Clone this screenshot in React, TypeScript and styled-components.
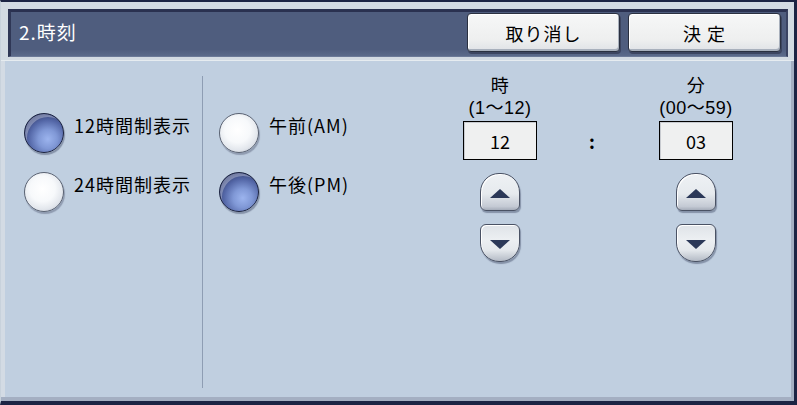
import React, { useState } from "react";
import styled, { createGlobalStyle } from "styled-components";

const GlobalStyle = createGlobalStyle`
  html, body {
    margin: 0;
    padding: 0;
    background: #1c2444;
  }
  body {
    font-family: "Noto Sans CJK JP", "Noto Sans", sans-serif;
  }
`;

type Format = "12" | "24";
type Meridiem = "AM" | "PM";

const pad2 = (n: number) => (n < 10 ? `0${n}` : `${n}`);

const App: React.FC = () => {
  const [format, setFormat] = useState<Format>("12");
  const [meridiem, setMeridiem] = useState<Meridiem>("PM");
  const [hour, setHour] = useState(12);
  const [minute, setMinute] = useState(3);

  const maxHour = format === "12" ? 12 : 23;
  const minHour = format === "12" ? 1 : 0;

  function stepHour(d: number) {
    let h = hour + d;
    if (h > maxHour) h = minHour;
    if (h < minHour) h = maxHour;
    setHour(h);
  }
  function stepMinute(d: number) {
    setMinute((minute + d + 60) % 60);
  }

  return (
    <>
      <GlobalStyle />
      <Frame>
        <HeaderStrip>
          <HeaderBar>
            <Title>2.時刻</Title>
            <HeaderButtons>
              <HeaderButton>取り消し</HeaderButton>
              <HeaderButton>決 定</HeaderButton>
            </HeaderButtons>
          </HeaderBar>
        </HeaderStrip>

        <Body>
          <FormatColumn>
            <RadioRow onClick={() => setFormat("12")}>
              <Radio $on={format === "12"} />
              <RadioLabel>12時間制表示</RadioLabel>
            </RadioRow>
            <RadioRow onClick={() => setFormat("24")}>
              <Radio $on={format === "24"} />
              <RadioLabel>24時間制表示</RadioLabel>
            </RadioRow>
          </FormatColumn>

          <Divider />

          <MeridiemColumn>
            <RadioRow onClick={() => setMeridiem("AM")}>
              <Radio $on={meridiem === "AM"} />
              <RadioLabel>午前(AM)</RadioLabel>
            </RadioRow>
            <RadioRow onClick={() => setMeridiem("PM")}>
              <Radio $on={meridiem === "PM"} />
              <RadioLabel>午後(PM)</RadioLabel>
            </RadioRow>
          </MeridiemColumn>

          <TimeGroup>
            <TimeColumn>
              <TimeCaption>
                <CaptionLine>時</CaptionLine>
                <CaptionLine>(1〜12)</CaptionLine>
              </TimeCaption>
              <ValueBox>{hour}</ValueBox>
              <StepButton $dir="up" onClick={() => stepHour(1)}>
                <Arrow $dir="up" />
              </StepButton>
              <StepButton $dir="down" onClick={() => stepHour(-1)}>
                <Arrow $dir="down" />
              </StepButton>
            </TimeColumn>

            <ColonColumn>:</ColonColumn>

            <TimeColumn>
              <TimeCaption>
                <CaptionLine>分</CaptionLine>
                <CaptionLine>(00〜59)</CaptionLine>
              </TimeCaption>
              <ValueBox>{pad2(minute)}</ValueBox>
              <StepButton $dir="up" onClick={() => stepMinute(1)}>
                <Arrow $dir="up" />
              </StepButton>
              <StepButton $dir="down" onClick={() => stepMinute(-1)}>
                <Arrow $dir="down" />
              </StepButton>
            </TimeColumn>
          </TimeGroup>
        </Body>
      </Frame>
    </>
  );
};

const Frame = styled.div`
  width: 797px;
  height: 405px;
  box-sizing: border-box;
  border-top: 2px solid #1c2444;
  border-right: 3px solid #1c2444;
  border-bottom: 4px solid #1c2444;
  border-left: 1px solid #c8d2dc;
  background: #c0cfe0;
  display: flex;
  flex-direction: column;
  box-shadow: inset -3px -4px 0 #a4afc2, inset 4px 0 0 #d3dbe4;
`;

const HeaderStrip = styled.div`
  background: #d3dbe3;
  padding: 7px 6px 3px 7px;
  border-bottom: 1px solid #e6ecf0;
`;

const HeaderBar = styled.div`
  height: 48px;
  box-sizing: border-box;
  background: linear-gradient(#4f5d7e 0%, #4f5d7e 85%, #5b6a8a 100%);
  border-top: 3px solid #2a3150;
  border-left: 3px solid #2f3756;
  border-right: 2px solid #3a4362;
  border-bottom: 1px solid #6c7a98;
  display: flex;
  align-items: center;
  justify-content: space-between;
  padding: 0 5px 0 8px;
`;

const Title = styled.div`
  color: #ffffff;
  font-size: 19px;
  letter-spacing: 1px;
  line-height: 24px;
  margin-top: -5px;
`;

const HeaderButtons = styled.div`
  display: flex;
  gap: 8px;
  margin-top: -3px;
`;

const HeaderButton = styled.button`
  width: 153px;
  height: 39px;
  box-sizing: border-box;
  border: 1px solid #2a3040;
  border-radius: 4px;
  background: linear-gradient(#f6f7f7 0%, #eeefef 70%, #dfe2e6 100%);
  box-shadow: inset -1px -2px 0 #a8b0bc, inset 1px 1px 0 #ffffff,
    1px 2px 0 #3c4560;
  font-family: "Noto Sans CJK JP", "Noto Sans", sans-serif;
  font-size: 18px;
  letter-spacing: 1px;
  color: #000;
  padding: 0;
  cursor: pointer;
`;

const Body = styled.div`
  flex: 1;
  display: flex;
  padding: 15px 0 13px 0;
`;

const RadioColumn = styled.div`
  display: flex;
  flex-direction: column;
  gap: 19px;
  padding-top: 37px;
`;

const FormatColumn = styled(RadioColumn)`
  width: 178px;
  padding-left: 23px;
`;

const MeridiemColumn = styled(RadioColumn)`
  width: 244px;
  padding-left: 16px;
`;

const Divider = styled.div`
  width: 1px;
  background: #8e9db3;
`;

const RadioRow = styled.div`
  display: flex;
  align-items: flex-start;
  gap: 10px;
  cursor: pointer;
`;

const Radio = styled.div<{ $on: boolean }>`
  width: 40px;
  height: 40px;
  flex: none;
  box-sizing: border-box;
  border-radius: 50%;
  border: 1px solid ${(p) => (p.$on ? "#1a2240" : "#5a6272")};
  background: ${(p) =>
    p.$on
      ? "radial-gradient(circle at 60% 66%, #9cb4ee 0%, #8098d6 28%, #5366a6 56%, #343f70 80%, #1f2748 100%)"
      : "radial-gradient(circle at 46% 42%, #ffffff 0%, #f7f9fb 42%, #e2e6ec 68%, #b4bbc8 88%, #8a92a2 100%)"};
  box-shadow: ${(p) =>
    p.$on
      ? "inset 4px 5px 0 -2px rgba(255,255,255,0.3), 1px 2px 1px #8592a8"
      : "1px 2px 1px #8f9bb0"};
`;

const RadioLabel = styled.div`
  font-size: 18px;
  line-height: 24px;
  letter-spacing: 1px;
  color: #000;
  white-space: nowrap;
`;

const TimeGroup = styled.div`
  display: flex;
  align-items: flex-start;
`;

const TimeColumn = styled.div`
  width: 74px;
  display: flex;
  flex-direction: column;
  align-items: center;
`;

const TimeCaption = styled.div`
  height: 45px;
  display: flex;
  flex-direction: column;
  align-items: center;
  margin-top: -1px;
  margin-bottom: 1px;
`;

const CaptionLine = styled.div`
  font-family: "Liberation Sans", "Noto Sans CJK JP", sans-serif;
  font-size: 18px;
  line-height: 22px;
  letter-spacing: 0.5px;
  color: #000;
  white-space: nowrap;
`;

const ValueBox = styled.div`
  width: 74px;
  height: 39px;
  box-sizing: border-box;
  border: 1px solid #000;
  background: #eff0f0;
  box-shadow: inset 1px 1px 0 #c8cbd0;
  display: flex;
  align-items: center;
  justify-content: center;
  font-size: 18px;
  color: #000;
  margin-bottom: 13px;
`;

const ColonColumn = styled.div`
  width: 110px;
  padding-right: 12px;
  padding-top: 53px;
  text-align: center;
  font-size: 18px;
  font-weight: 700;
  line-height: 24px;
`;

const StepButton = styled.button<{ $dir: "up" | "down" }>`
  width: 40px;
  height: 38px;
  box-sizing: border-box;
  margin-bottom: 13px;
  padding: 0;
  border: 1px solid #4a5264;
  border-radius: ${(p) =>
    p.$dir === "up" ? "19px 19px 6px 6px" : "6px 6px 19px 19px"};
  background: ${(p) =>
    p.$dir === "up"
      ? "linear-gradient(#eef1f4 0%, #e6eaee 55%, #c4cad4 90%, #a6adba 100%)"
      : "linear-gradient(#dfe3e8 0%, #eceff2 40%, #e4e8ec 70%, #b4bbc6 100%)"};
  box-shadow: inset 1px 1px 0 #ffffff, 1px 2px 1px #8592a8;
  display: flex;
  align-items: center;
  justify-content: center;
  cursor: pointer;
`;

const Arrow = styled.span<{ $dir: "up" | "down" }>`
  width: 0;
  height: 0;
  border-left: 10px solid transparent;
  border-right: 10px solid transparent;
  ${(p) =>
    p.$dir === "up"
      ? "border-bottom: 9px solid #2b3858; margin-top: 2px;"
      : "border-top: 9px solid #2b3858; margin-top: 2px;"}
`;

export default App;
